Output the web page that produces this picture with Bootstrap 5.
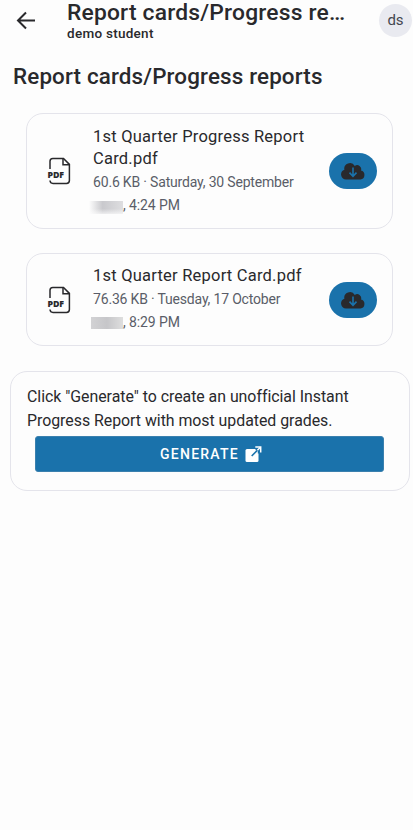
<!DOCTYPE html>
<html lang="en">
<head>
<meta charset="utf-8">
<meta name="viewport" content="width=device-width, initial-scale=1">
<title>Report cards/Progress reports</title>
<link href="https://cdn.jsdelivr.net/npm/bootstrap@5.3.0/dist/css/bootstrap.min.css" rel="stylesheet">
<style>
body{font-family:Roboto,"Liberation Sans",sans-serif;background:#fdfdfd;color:#29292c;min-height:830px;overflow:hidden}
.topbar{height:42px;padding-left:16px;padding-right:1px}
.back{width:20px;height:20px;margin-top:10px;margin-right:31px}
.app-title{font-size:22.8px;line-height:26px;font-weight:500;letter-spacing:.2px}
.app-sub{font-size:13.5px;line-height:15px;font-weight:500;letter-spacing:.27px}
.avatar{width:33px;height:33px;background:#e9eaf0;color:#44474f;font-size:15px;margin-top:4px}
.page-title{font-size:22.4px;line-height:28px;font-weight:500;letter-spacing:.15px;margin:20px 0 23px 13px}
.panel{border:1px solid #e4e4eb;border-radius:17px;background:#fdfdfd}
.report{margin:0 20px 24px 26px;padding:11px 15px 11px 20px}
.report-a{height:116px}
.report-b{height:93px;margin-bottom:25px}
.pdf{width:26px;height:30px;margin-right:20px}
.name{font-size:16.5px;line-height:22px;letter-spacing:.22px}
.report-a .name{padding-top:1px}
.meta{font-size:14px;line-height:23px;letter-spacing:-.18px;color:#5a5d68}
.report-a .meta,.report-b .meta{position:relative;top:1px}
.meta .pm{letter-spacing:-.1px}
.hidden-year{width:34px;height:13px;margin-left:-4px;background:linear-gradient(180deg,#fdfdfd00 60%,#fdfdfdb0),linear-gradient(90deg,#fdfdfd,#c9c9cd 40%,#dedee0)}
.hidden-year-b{width:32px;height:12px;margin-left:-2px;background:linear-gradient(90deg,#d2d2d4,#c6c6c9 50%,#dedede)}
.cloud{width:48px;height:36px;background:#1a72ab;border-radius:18px;border:0}
.instant{margin:0 3px 0 10px;height:120px;padding:13px 25px 0 16px}
.instant p{font-size:15.9px;line-height:24px;letter-spacing:-.03px}
.generate{height:36px;width:349px;margin:3px 0 0 8px;background:#1a72ab;border:1px solid #3a80ae;border-radius:3px;color:#fff;font-size:14px;font-weight:500;letter-spacing:1.25px;padding-left:3px!important}
.generate svg{margin-left:6px}
</style>
</head>
<body>
<header class="topbar d-flex align-items-start">
  <svg class="back flex-shrink-0" viewBox="0 0 20 20" fill="none" stroke="#29292c" stroke-width="2"><path d="M19 10.5H2M10 2.5l-8 8 8 8"/></svg>
  <div>
    <div class="app-title text-nowrap">Report cards/Progress re…</div>
    <div class="app-sub">demo student</div>
  </div>
  <div class="avatar rounded-circle d-flex align-items-center justify-content-center ms-auto">ds</div>
</header>
<main>
  <h1 class="page-title">Report cards/Progress reports</h1>
  <section class="panel report report-a d-flex">
    <svg class="pdf flex-shrink-0 my-auto" viewBox="0 0 26 30"><g fill="none" stroke="#29292c" stroke-width="1.5"><path d="M3 13V5.2Q3 2.4 5.8 2.4H16.5L22.4 8.4V24.5Q22.4 27.4 19.5 27.4H6Q3.2 27.4 3 24.5"/><path d="M16 2.6V8.8H22.4"/></g><text x="0.5" y="21.8" font-family="Open Sans,sans-serif" font-size="8.8" font-weight="800" fill="#29292c" textLength="16.5">PDF</text></svg>
    <div class="flex-grow-1">
      <div class="name">1st Quarter Progress Report<br>Card.pdf</div>
      <div class="meta">60.6 KB · Saturday, 30 September</div>
      <div class="meta d-flex align-items-center"><span class="hidden-year mt-1"></span><span class="pm">, 4:24 PM</span></div>
    </div>
    <button class="cloud p-0 flex-shrink-0 my-auto d-flex align-items-center justify-content-center" aria-label="Download"><svg width="24" height="18" viewBox="0 0 24 18"><path d="M5 17.5A5 5 0 0 1 3.4 7.8 5.6 5.6 0 0 1 13.8 4 4 4 0 0 1 20 8.5 4.6 4.6 0 0 1 19.5 17.5Z" fill="#29292c"/><path d="M12 5.5v8.7M8.5 10.6l3.5 3.7 3.5-3.7" fill="none" stroke="#1a72ab" stroke-width="1.6"/></svg></button>
  </section>
  <section class="panel report report-b d-flex">
    <svg class="pdf flex-shrink-0 my-auto" viewBox="0 0 26 30"><g fill="none" stroke="#29292c" stroke-width="1.5"><path d="M3 13V5.2Q3 2.4 5.8 2.4H16.5L22.4 8.4V24.5Q22.4 27.4 19.5 27.4H6Q3.2 27.4 3 24.5"/><path d="M16 2.6V8.8H22.4"/></g><text x="0.5" y="21.8" font-family="Open Sans,sans-serif" font-size="8.8" font-weight="800" fill="#29292c" textLength="16.5">PDF</text></svg>
    <div class="flex-grow-1">
      <div class="name">1st Quarter Report Card.pdf</div>
      <div class="meta">76.36 KB · Tuesday, 17 October</div>
      <div class="meta d-flex align-items-center"><span class="hidden-year hidden-year-b"></span><span class="pm">, 8:29 PM</span></div>
    </div>
    <button class="cloud p-0 flex-shrink-0 my-auto d-flex align-items-center justify-content-center" aria-label="Download"><svg width="24" height="18" viewBox="0 0 24 18"><path d="M5 17.5A5 5 0 0 1 3.4 7.8 5.6 5.6 0 0 1 13.8 4 4 4 0 0 1 20 8.5 4.6 4.6 0 0 1 19.5 17.5Z" fill="#29292c"/><path d="M12 5.5v8.7M8.5 10.6l3.5 3.7 3.5-3.7" fill="none" stroke="#1a72ab" stroke-width="1.6"/></svg></button>
  </section>
  <section class="panel instant">
    <p class="mb-0">Click "Generate" to create an unofficial Instant<br>Progress Report with most updated grades.</p>
    <button class="generate p-0 d-flex align-items-center justify-content-center">GENERATE<svg width="17" height="17" viewBox="0 0 17 17"><path d="M2 3H13.5V14.5Q13.5 16 12 16H2Q.5 16 .5 14.5V4.5Q.5 3 2 3Z" fill="#fff"/><path d="M10.5 3H14V7.5" fill="none" stroke="#1a72ab" stroke-width="2.4"/><path d="M6.7 10 14 2.7" stroke="#1a72ab" stroke-width="1.6"/><path d="M10.3 1h5.4V6.4" fill="none" stroke="#fff" stroke-width="1.5"/><path d="M12.4 4.3 15.4 1.3" stroke="#fff" stroke-width="1.5"/></svg></button>
  </section>
</main>
<script src="https://cdn.jsdelivr.net/npm/bootstrap@5.3.0/dist/js/bootstrap.bundle.min.js"></script>
</body>
</html>
